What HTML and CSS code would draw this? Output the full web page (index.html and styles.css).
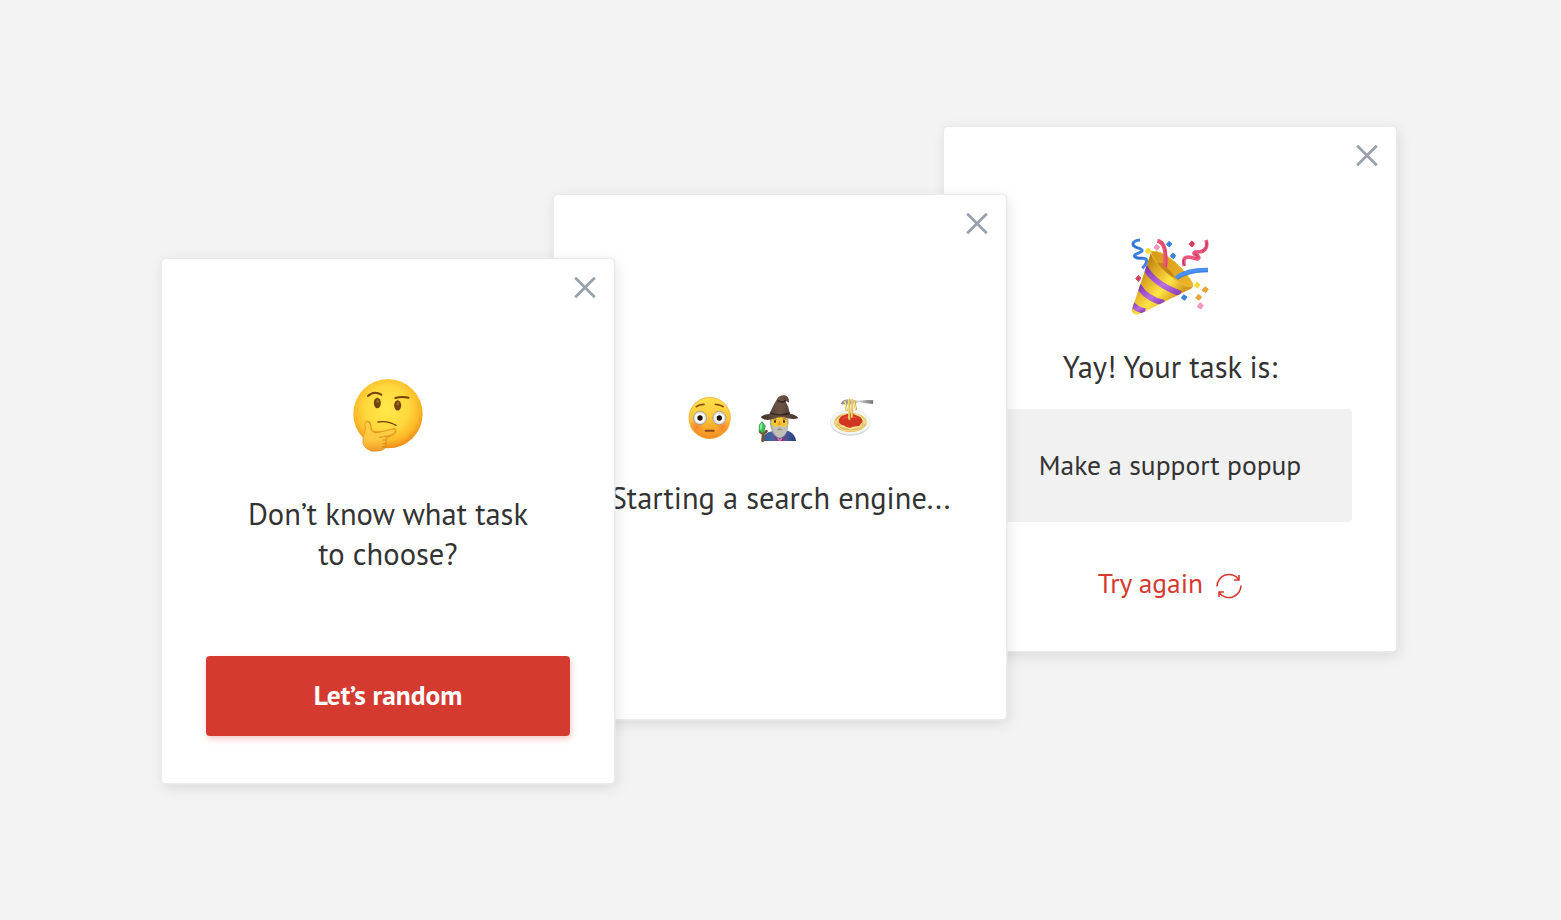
FILE: index.html
```html
<!DOCTYPE html>
<html lang="en">
<head>
<meta charset="utf-8">
<title>Random task</title>
<link rel="stylesheet" href="styles.css">
</head>
<body>
<main class="stage">
  <section class="card card-result">
    <button class="close" aria-label="Close"><svg viewBox="0 0 22 22"><path d="M1.2 .7 20.8 20.3M20.8 .7 1.2 20.3"/></svg></button>
    <svg class="emoji-large" viewBox="0 0 300 300">
      <defs>
        <linearGradient id="cone" x1="60" y1="120" x2="165" y2="215" gradientUnits="userSpaceOnUse"><stop offset="0" stop-color="#b98210"/><stop offset=".3" stop-color="#e0ac25"/><stop offset=".65" stop-color="#ffe645"/><stop offset="1" stop-color="#d4991c"/></linearGradient>
        <linearGradient id="inner" x1="0" y1="0" x2="1" y2="1"><stop offset="0" stop-color="#d49a18"/><stop offset="1" stop-color="#efb52c"/></linearGradient>
        <linearGradient id="band" x1="0" y1="0" x2="1" y2="1"><stop offset="0" stop-color="#7d35ae"/><stop offset=".6" stop-color="#bb6ee2"/><stop offset="1" stop-color="#8b3cb7"/></linearGradient>
        <clipPath id="coneclip"><path d="M94 70Q150 75 219 174Q218 182 205 186L61 257Q48 264 39 255Q32 248 38 238Z"/></clipPath>
      </defs>
      <path fill="url(#cone)" d="M94 70Q150 75 219 174Q218 182 205 186L61 257Q48 264 39 255Q32 248 38 238Z"/>
      <g clip-path="url(#coneclip)" fill="none" stroke="url(#band)" stroke-width="17">
        <path d="M74 116Q101 168 182 197"/><path d="M55 172Q77 212 132 224"/><path d="M34 226Q50 246 76 249"/>
      </g>
      <path fill="url(#inner)" stroke="#e6bd3c" stroke-width="3" d="M94 71Q91 86 125 120Q163 157 198 174Q222 181 217 165Q204 139 166 103Q118 63 94 71Z"/>
      <path fill="#c68412" d="M127 105Q151 125 169 152Q139 139 111 104Z"/>
      <path fill="none" stroke="#eb5479" stroke-width="12" d="M112 38C134 42 139 68 135 118"/>
      <path fill="none" stroke="#c83159" stroke-width="2" d="M122 43C141 57 142 86 140 117"/>
      <path fill="none" stroke="#4b91ef" stroke-width="13" d="M168 150C196 129 229 125 264 126"/>
      <path fill="none" stroke="#286bc7" stroke-width="2" d="M173 154C202 135 234 131 264 131"/>
      <path fill="none" stroke="#3f83e2" stroke-width="9" stroke-linejoin="round" d="M60 36C35 38 33 54 51 59C70 64 72 70 53 76C34 83 45 92 67 91C83 90 85 101 67 121"/>
      <path fill="none" stroke="#2262c6" stroke-width="3" d="M41 45Q37 55 56 61M43 82Q45 91 68 90"/>
      <path fill="none" stroke="#ec5780" stroke-width="11" stroke-linejoin="round" d="M258 36C264 55 257 68 242 71C222 71 214 76 231 82C243 91 234 96 217 89C196 83 187 90 193 114"/>
      <path fill="none" stroke="#bd2c59" stroke-width="3" d="M261 42Q262 61 247 70M224 78Q244 88 227 91M191 94Q187 103 194 114"/>
      <g fill="#3a82dc" stroke="#3a82dc" stroke-width="3"><path d="m147 40 9 8-8 9-9-8zM158 75l9 8-7 9-9-7zM191 200l10 7-7 10-10-7z"/></g>
      <g fill="#f397bd" stroke="#f397bd" stroke-width="3"><path d="m109 49 10 8-8 10-9-8zM240 224l10 8-7 11-11-7z"/></g>
      <g fill="#d43e61" stroke="#d43e61" stroke-width="3"><path d="m215 39 9 8-8 10-9-8zM55 142l8 8-7 10-9-8z"/></g>
      <g fill="#f4dd32" stroke="#f4dd32" stroke-width="3"><path d="m84 60 9 8-8 10-9-8zM231 162l9 8-7 10-10-7z"/></g>
      <g fill="#eea33b" stroke="#eea33b" stroke-width="3"><path d="m255 176 10 8-8 10-11-7zM235 199l10 8-8 10-10-7z"/></g>
    </svg>
    <p class="title title-result">Yay! Your task is:</p>
    <div class="task">Make a support popup</div>
    <a class="again">Try again
      <svg class="refresh" viewBox="0 0 26 26"><path d="M1 13.5A12 12 0 0 1 22.700 6.400M25 12.500A12 12 0 0 1 3.300 19.600M23 2V7H18M3 24V19H8"/></svg>
    </a>
  </section>

  <section class="card card-search">
    <button class="close" aria-label="Close"><svg viewBox="0 0 22 22"><path d="M1.2 .7 20.8 20.3M20.8 .7 1.2 20.3"/></svg></button>
    <div class="emoji-row">
      <svg viewBox="0 0 195 195">
        <defs>
          <linearGradient id="flush" x1="0" y1="0" x2="0" y2="1"><stop offset="0" stop-color="#ffe24a"/><stop offset=".5" stop-color="#ffc637"/><stop offset="1" stop-color="#f18a22"/></linearGradient>
          <radialGradient id="cheek"><stop offset="0" stop-color="#f35c32" stop-opacity=".5"/><stop offset="1" stop-color="#f36c32" stop-opacity="0"/></radialGradient>
          <radialGradient id="eye"><stop offset=".6" stop-color="#fff"/><stop offset="1" stop-color="#c2c9ca"/></radialGradient>
        </defs>
        <circle cx="89" cy="99" r="62" fill="url(#flush)" stroke="#efa126" stroke-width="2"/>
        <circle cx="50" cy="125" r="22" fill="url(#cheek)"/><circle cx="128" cy="125" r="22" fill="url(#cheek)"/>
        <circle cx="60" cy="99" r="20" fill="url(#eye)" stroke="#a68e6c" stroke-width="2"/><circle cx="118" cy="99" r="20" fill="url(#eye)" stroke="#a68e6c" stroke-width="2"/>
        <circle cx="60" cy="99" r="8" fill="#1a1010"/><circle cx="118" cy="99" r="8" fill="#1a1010"/>
        <path fill="none" stroke="#8a4a12" stroke-width="5" stroke-linecap="round" d="M49 65Q58 58 72 58M106 58Q120 58 129 65"/>
        <path stroke="#8d4920" stroke-width="6" stroke-linecap="round" d="M77 137h24"/>
      </svg>
      <svg viewBox="0 0 195 195">
        <defs>
          <linearGradient id="hat" x1="0" x2="1"><stop offset="0" stop-color="#403027"/><stop offset=".5" stop-color="#6d5546"/><stop offset="1" stop-color="#42342c"/></linearGradient>
          <linearGradient id="robe" x1="0" x2="1"><stop offset="0" stop-color="#345c91"/><stop offset=".55" stop-color="#526bb0"/><stop offset="1" stop-color="#263e78"/></linearGradient>
        </defs>
        <path fill="url(#robe)" d="M52 168Q55 143 82 139L129 137Q151 146 153 168Z"/>
        <path fill="#7c3a80" d="M86 148 104 168 126 148 119 168H91Z"/>
        <path fill="#a6a59b" d="M75 99Q73 135 88 151Q103 167 119 151Q133 134 130 97Z"/>
        <path fill="#ffc633" d="M80 95H127V119Q123 130 104 129Q84 130 80 119Z"/>
        <path fill="#c1c0b7" d="M79 118Q90 131 97 124Q104 120 112 124Q121 130 129 117Q128 142 116 153Q104 163 91 149Q82 137 79 118Z"/>
        <path fill="none" stroke="#6d695e" stroke-width="3" d="M83 103Q89 99 95 103M113 103Q119 99 125 103M98 134Q104 130 110 134"/>
        <ellipse cx="90" cy="109" rx="3" ry="5" fill="#482914"/><ellipse cx="117" cy="109" rx="3" ry="5" fill="#482914"/>
        <path fill="#e5962d" d="m103 108-5 11h11z"/>
        <path fill="url(#hat)" d="M47 96Q57 87 73 87Q83 64 96 42Q103 29 119 31Q133 34 132 53L120 46Q132 66 135 87Q151 88 160 99Q148 105 129 100Q104 92 81 103Q58 109 47 96Z"/>
        <path fill="none" stroke="#2e2520" stroke-width="4" d="M76 84Q104 95 135 84M99 47Q111 55 123 47"/>
        <path fill="none" stroke="#785236" stroke-width="9" stroke-linecap="round" d="M53 167 55 147M46 140Q55 150 64 139"/>
        <path fill="#38bd59" stroke="#259242" stroke-width="2" d="m51 110 10 13-5 22-14-7 1-18z"/><path fill="#98ee93" d="m51 113 1 17-6 6-1-15z"/>
        <path fill="none" stroke="#ed75a0" stroke-width="4" d="m98 160 6 7 7-7"/>
      </svg>
      <svg class="pasta" viewBox="0 0 195 195">
        <defs><linearGradient id="fork" x1="0" x2="1"><stop offset="0" stop-color="#8b8d8e"/><stop offset=".5" stop-color="#d4d6d7"/><stop offset="1" stop-color="#6f7476"/></linearGradient></defs>
        <ellipse cx="91" cy="114" rx="60" ry="38" fill="#cfd4d5"/><ellipse cx="91" cy="111" rx="60" ry="37" fill="#f3f5f4" stroke="#dfe3e3"/>
        <ellipse cx="91" cy="112" rx="49" ry="29" fill="#e8c667"/>
        <g fill="none" stroke="#fae99d" stroke-width="3"><path d="M44 107Q55 138 88 137Q125 140 137 110M49 101Q63 128 91 130Q120 130 134 103M47 119Q54 88 82 86M134 119Q129 90 106 88M54 126Q79 118 96 137M84 138Q112 120 130 126"/></g>
        <g fill="none" stroke="#c7963a" stroke-width="1.5"><path d="M46 113Q65 137 90 135Q120 138 137 115M48 105Q54 93 74 90"/></g>
        <path fill="#d33523" d="M56 109Q58 94 72 91Q91 80 107 91Q126 95 128 111Q121 116 118 123Q99 124 91 128Q78 129 71 121Q59 120 56 109Z"/>
        <path fill="#ee5037" d="M64 103Q87 85 116 100Q94 96 64 103Z"/>
        <path fill="url(#fork)" d="M62 57Q67 44 82 43L119 47Q139 44 160 46L159 57Q136 56 117 51L101 56Q86 61 70 57Z"/>
        <path fill="none" stroke="#848789" stroke-width="2" d="M65 61Q75 49 110 51"/>
        <g fill="none" stroke-linecap="round"><path stroke="#c99b3e" stroke-width="6" d="M76 50 80 76M87 44 89 103M97 45 96 96M103 48 108 73"/><path stroke="#f8e17e" stroke-width="4" d="M75 50 80 75M86 43 87 102M96 44 95 95M102 47 107 72"/></g>
      </svg>
    </div>
    <p class="title title-search">Starting a search engine...</p>
  </section>

  <section class="card card-start">
    <button class="close" aria-label="Close"><svg viewBox="0 0 22 22"><path d="M1.2 .7 20.8 20.3M20.8 .7 1.2 20.3"/></svg></button>
    <svg class="emoji-large" viewBox="0 0 300 300">
      <defs>
        <radialGradient id="face" cx=".48" cy=".42" r=".58"><stop offset="0" stop-color="#ffe94b"/><stop offset=".55" stop-color="#ffd83c"/><stop offset=".82" stop-color="#fdb928"/><stop offset="1" stop-color="#ee8c17"/></radialGradient>
        <linearGradient id="hand" x1="0" y1="0" x2="0" y2="1"><stop offset="0" stop-color="#ffd142"/><stop offset=".6" stop-color="#ffc842"/><stop offset="1" stop-color="#f09e26"/></linearGradient>
      </defs>
      <circle cx="144" cy="146" r="104" fill="url(#face)"/>
      <ellipse cx="112" cy="114" rx="10.500" ry="15.500" fill="#74420d"/><ellipse cx="173" cy="121" rx="10.500" ry="15.500" fill="#74420d"/>
      <ellipse cx="113" cy="109" rx="4" ry="6" fill="#9b681f"/><ellipse cx="174" cy="116" rx="4" ry="6" fill="#9b681f"/>
      <path fill="none" stroke="#784109" stroke-width="6" stroke-linecap="round" d="M84 93Q101 76 124 89M166 99Q184 94 206 98"/>
      <path fill="none" stroke="#704107" stroke-width="4" stroke-linecap="round" d="M114 171Q143 166 168 181"/>
      <path fill="#e08c18" opacity=".75" d="M74 176Q80 160 92 172L97 196Q114 204 164 188Q176 199 161 211L140 220V246Q130 263 91 259Z"/>
      <path fill="url(#hand)" stroke="#e38d17" stroke-width="2" d="M78 171Q86 166 91 181Q91 191 97 199Q105 207 118 202L158 192Q168 193 166 201Q164 208 138 214Q141 219 137 223Q142 229 136 234Q140 243 132 246Q126 258 101 258Q75 256 69 235Q67 216 74 202Q78 190 75 179Q74 173 78 171Z"/>
      <path fill="none" stroke="#d97f13" stroke-width="2.500" stroke-linecap="round" d="M118 217Q130 217 138 213M128 225H137M128 236H136M126 245H132"/>
    </svg>
    <p class="title title-start">Don’t know what task<br>to choose?</p>
    <button class="primary">Let’s random</button>
  </section>
</main>
</body>
</html>
```
FILE: styles.css
```css
* { box-sizing: border-box; }
body {
  margin: 0;
  background: #fafafa;
  color: #333;
  font-family: "PT Sans", "Noto Sans", sans-serif;
}
.stage {
  position: relative;
  width: 1560px;
  height: 920px;
  overflow: hidden;
  background: #f3f3f3;
}
.card {
  position: absolute;
  display: flex;
  flex-direction: column;
  align-items: center;
  width: 452px;
  height: 523.5px;
  border-radius: 4px;
  background: #fff;
  box-shadow: 0 0 0 1.5px #ebebeb, 2px 4px 14px 1px rgba(0, 0, 0, .1);
}
.card-result { left: 944px; top: 127px; }
.card-search { left: 554px; top: 195px; }
.card-start { left: 162px; top: 259px; }
.close {
  position: absolute;
  top: 18px;
  right: 18px;
  width: 22px;
  height: 22px;
  padding: 0;
  border: 0;
  background: none;
}
.close svg { display: block; fill: none; stroke: #9aa2ad; stroke-width: 2.8; }
.emoji-large { flex: none; width: 100px; height: 100px; }
.card-start .emoji-large { margin: 106px 0 0 4px; }
.card-result .emoji-large { margin-top: 101px; }
.title {
  margin: 0;
  font-size: 30.5px;
  line-height: 40px;
  text-align: center;
  white-space: nowrap;
}
.title-start { margin-top: 29px; }
.primary {
  width: 364px;
  height: 79.5px;
  margin-top: 82px;
  padding: 0 0 1px;
  border: 0;
  border-radius: 4px;
  background: #d43a2f;
  color: #fff;
  font: 700 27.4px/40px "PT Sans", "Noto Sans", sans-serif;
  box-shadow: 1px 3px 6px rgba(212, 58, 47, .28);
}
.emoji-row { display: flex; margin: 190px 0 0 4px; }
.emoji-row svg { width: 65px; height: 65px; }
.emoji-row .pasta { margin-left: 10px; }
.title-search { margin: 28px 0 0 1px; font-size: 30.4px; }
.title-result { margin-top: 19px; }
.task {
  display: flex;
  align-items: center;
  justify-content: center;
  width: 364px;
  height: 113px;
  margin-top: 22px;
  padding-bottom: 2px;
  border-radius: 4px;
  background: #f1f1f1;
  font-size: 27.5px;
  white-space: nowrap;
}
.again {
  display: flex;
  align-items: center;
  gap: 13px;
  margin-top: 41px;
  color: #d43a2f;
  font-size: 27.5px;
  line-height: 40px;
  white-space: nowrap;
}
.refresh { width: 26px; height: 26px; margin-top: 6px; fill: none; stroke: #d43a2f; stroke-width: 1.6; }
```
